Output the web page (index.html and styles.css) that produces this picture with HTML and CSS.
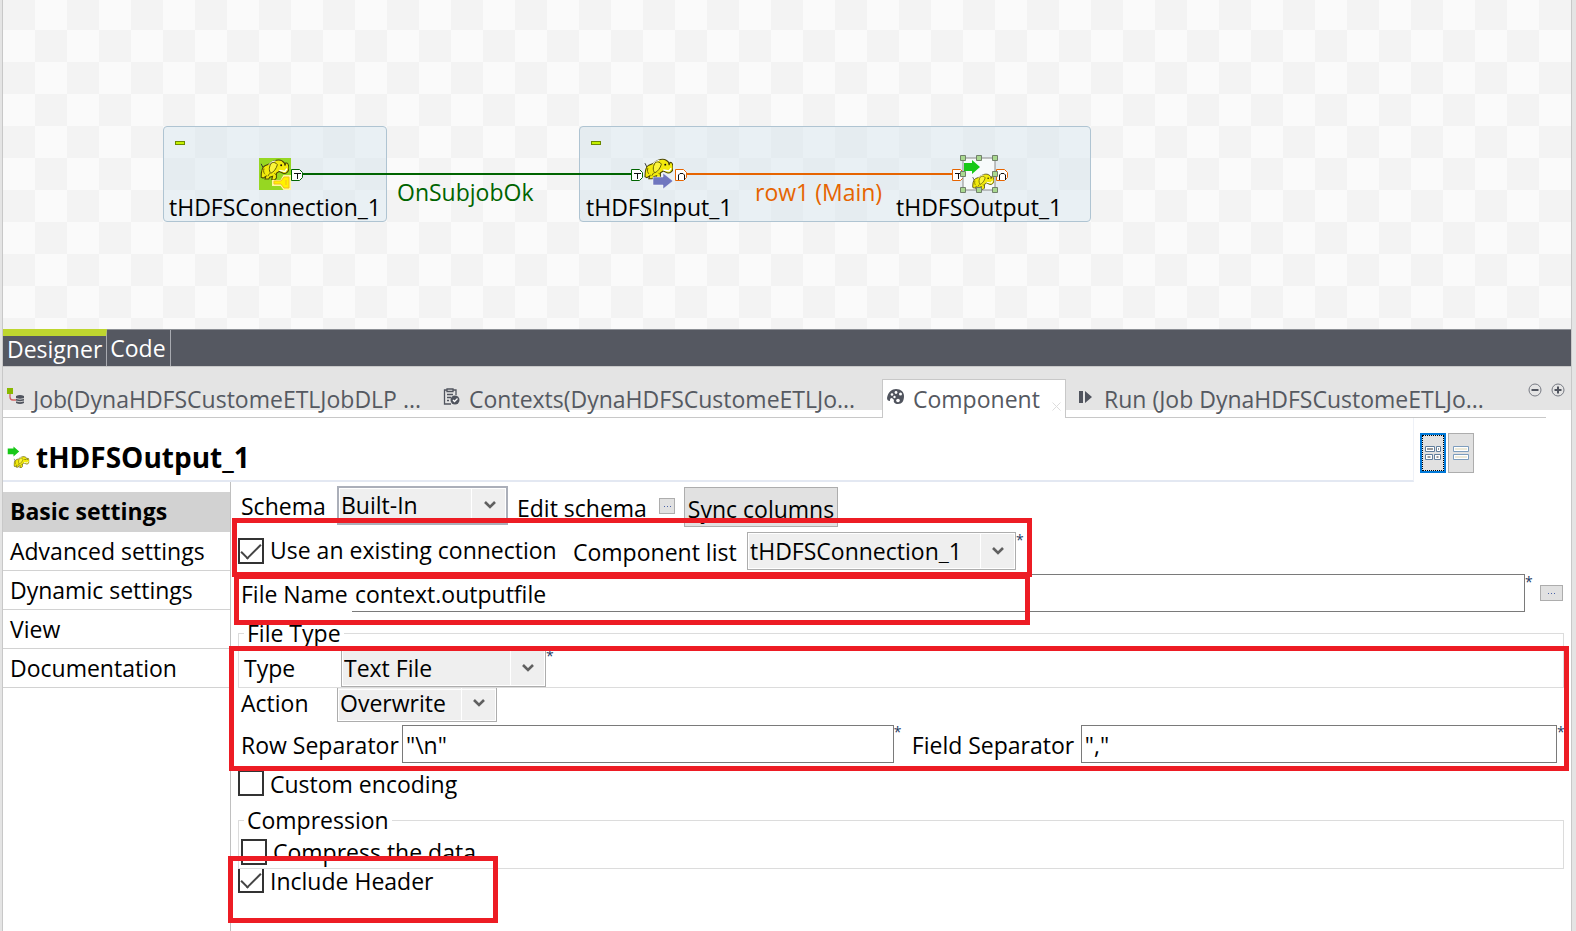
FILE: index.html
```html
<!DOCTYPE html>
<html lang="en">
<head>
<meta charset="utf-8">
<title>Job designer</title>
<link rel="stylesheet" href="styles.css">
</head>
<body>
<svg class="defs" aria-hidden="true">
  <symbol id="elephant" viewBox="0 0 30 22">
    <path d="M3 9 1 5" fill="none" stroke="#333" stroke-width="1"/>
    <path d="M10 5C14 1 20 0 23 2c2 1 3 3 3 5l1-3c2 0 3 3 3 6s-3 6-6 5l-4-2-3 2v5l-2 2h-3l1-4-3 1-1 2H5l1-3-3 2-2-1C1 15 1 9 5 7z" fill="#f2ea0c" stroke="#4a4604" stroke-width="1.1"/>
    <path d="M12 4c-3 4-3 8-1 11 3-1 6-5 7-9-1-2-4-3-6-2z" fill="#fbf53a" stroke="#5d5805"/>
    <path d="M4 10c-1 3 0 5 1 6M8 18l2-3M15 15l2 2" fill="none" stroke="#6b6506"/>
    <path d="m20 12 6 1 2-3" fill="none" stroke="#fff" stroke-width="1.4"/>
    <circle cx="22" cy="6.500" r="1" fill="#111"/>
    <path d="m9 6 3-3 4-1" fill="none" stroke="#fff"/>
  </symbol>
  <symbol id="chevron" viewBox="0 0 12 9">
    <path d="m1 1 5 5 5-5" fill="none" stroke="#606060" stroke-width="2.600"/>
  </symbol>
  <symbol id="output" viewBox="0 0 32 32">
    <path d="M1 5h8V2l8 7-8 7v-3H1z" fill="#17c817"/>
    <use href="#elephant" x="9" y="15" width="22" height="17"/>
  </symbol>
  <symbol id="port-t" viewBox="0 0 12 12">
    <path d="M.5.5h8l3 3v5l-3 3h-8z" fill="#fff" stroke="currentColor"/>
    <path d="M3 4.500h7M6.500 4.500V10" fill="none" stroke="#111"/>
  </symbol>
  <symbol id="port-n" viewBox="0 0 12 12">
    <path d="M.5.5h8l3 3v5l-3 3h-8z" fill="#fff" stroke="currentColor"/>
    <path d="M3.500 11V6l1.500-1.500h3L9.500 6v5" fill="none" stroke="#111"/>
  </symbol>
</svg>

<div class="window">
  <section class="canvas" aria-label="Designer canvas">
    <div class="subjob subjob-a"><i class="fold"></i></div>
    <div class="subjob subjob-b"><i class="fold"></i></div>

    <svg class="icon32 node-a" viewBox="0 0 32 32">
      <path d="M0 0h32v32H0z" fill="#96d722"/>
      <use href="#elephant" x="1" y="1" width="29" height="21"/>
      <path d="M14 23h8l3-5h6v13h-6l-3-4h-8z" fill="#fdf43a" stroke="#fff7a0" stroke-width="2"/>
      <path d="M15 23h7l3-4h5v11h-5l-3-4h-7zM27 22v5" fill="#fff200" stroke="#f5bd1c"/>
    </svg>
    <svg class="icon32 node-b" viewBox="0 0 32 32">
      <use href="#elephant" x="0" y="0" width="29" height="22"/>
      <path d="M9 19h10v-4l10 8-10 8v-4H9z" fill="#7077bf" stroke="#fff" stroke-width=".5"/>
    </svg>
    <svg class="port main port-4"><use href="#port-t"/></svg>
    <svg class="port main port-5"><use href="#port-n"/></svg>
    <div class="selection"></div>
    <svg class="icon32 node-c" viewBox="0 0 32 32"><use href="#output"/></svg>

    <i class="link link-ok"></i>
    <i class="link link-main"></i>
    <svg class="port ok port-1"><use href="#port-t"/></svg>
    <svg class="port ok port-2"><use href="#port-t"/></svg>
    <svg class="port main port-3"><use href="#port-n"/></svg>
    <svg class="handles" viewBox="0 0 38 38" fill="#a9d88f" stroke="#70806a">
      <path d="M3 3h32v32H3z" fill="none" stroke="#8a8a8a"/>
      <path d="M.5.5h5v5h-5zM16.500.5h5v5h-5zM32.500.5h5v5h-5zM.5 16.500h5v5h-5zM32.500 16.500h5v5h-5zM.5 32.500h5v5h-5zM16.500 32.500h5v5h-5zM32.500 32.500h5v5h-5z"/>
    </svg>

    <span class="name name-a">tHDFSConnection_1</span>
    <span class="name name-b">tHDFSInput_1</span>
    <span class="name name-c">tHDFSOutput_1</span>
    <span class="name name-ok">OnSubjobOk</span>
    <span class="name name-main">row1 (Main)</span>
  </section>

  <nav class="modes">
    <button class="mode active">Designer</button>
    <button class="mode">Code</button>
  </nav>

  <nav class="views">
    <button class="view view-job">
      <svg class="icon18" viewBox="0 0 18 18"><path d="M0 0h6v6H0z" fill="#8ab800"/><path d="M3 6v3q0 3 3 3h3" fill="none" stroke="#cf6060" stroke-width="1.300"/><path d="M9 8q4-2 8 0v7q-4 2-8 0z" fill="#50545e"/><path d="M9 10.500q4 1.500 8 0M9 13q4 1.500 8 0" fill="none" stroke="#ccc"/></svg>
      <span>Job(DynaHDFSCustomeETLJobDLP ...</span>
    </button>
    <button class="view view-contexts">
      <svg class="icon18" viewBox="0 0 18 18" fill="none" stroke="#50545e"><path d="M4 2H1.500v14H8M10 2h3v5M4 1h6v2.500H4zM4 6.500h6M4 9.500h4M4 12.500h2" stroke-width="1.300"/><circle cx="12" cy="12" r="4.500" fill="#50545e" stroke="none"/><path d="m10 12 1.500 1.500L14.500 10.500" stroke="#fff" stroke-width="1.300"/></svg>
      <span>Contexts(DynaHDFSCustomeETLJo...</span>
    </button>
    <button class="view current">
      <svg class="icon18" viewBox="0 0 18 18"><path d="M0 10C1 4 5 1 9 1c5 0 8 3 8 7 0 5-2 8-6 8-3 0-5-2-4-4l-2-2c-2 0-2 1-2 3-2 0-3-1-3-3z" fill="#50545e"/><g fill="#fff"><circle cx="5" cy="6.500" r="1.300"/><circle cx="9" cy="4.500" r="1.400"/><circle cx="13.500" cy="6" r="1.500"/><circle cx="7.500" cy="9" r="1.200"/><circle cx="11" cy="12.500" r="1.800"/></g></svg>
      <span>Component</span>
      <svg class="close" viewBox="0 0 9 9"><path d="m.5.5 8 8m0-8-8 8" stroke="#ddd"/></svg>
    </button>
    <button class="view view-run">
      <svg class="icon18" viewBox="0 0 18 18"><path d="M1 3h4v12H1zM7 3l7 6-7 6z" fill="#50545e"/></svg>
      <span>Run (Job DynaHDFSCustomeETLJo...</span>
    </button>
    <div class="tools">
      <button aria-label="Minimize"><svg viewBox="0 0 14 14" fill="none"><circle cx="7" cy="7" r="6" stroke="#777a83"/><path d="M3.500 7h7" stroke="#50545e" stroke-width="2"/></svg></button>
      <button aria-label="Maximize"><svg viewBox="0 0 14 14" fill="none"><circle cx="7" cy="7" r="6" stroke="#777a83"/><path d="M3.500 7h7M7 3.500v7" stroke="#50545e" stroke-width="2"/></svg></button>
    </div>
  </nav>

  <header class="heading">
    <h1><svg class="icon23"><use href="#output"/></svg>tHDFSOutput_1</h1>
    <div class="layouts">
      <button class="layout chosen" aria-label="Grid layout"><svg viewBox="0 0 18 16" fill="#fff" stroke="#5f7d9c"><path d="M1.500 1.500h9v5h-9zM12.500 1.500h4v5h-4zM1.500 9.500h7v5h-7zM10.500 9.500h6v5h-6z"/><path d="M3 4h6M14 4h1M3.500 12h3M12.500 12h2" stroke="#999" stroke-width="2"/></svg></button>
      <button class="layout" aria-label="List layout"><svg viewBox="0 0 18 16" fill="#fff" stroke="#7d9dbd"><path d="M1.500 1.500h15v5h-15zM1.500 9.500h15v5h-15z"/><path d="M3 4h12M3 12h12" stroke="#ece9d8" stroke-width="2"/></svg></button>
    </div>
  </header>

  <main class="body">
    <nav class="sections">
      <a class="section here" href="#basic">Basic settings</a>
      <a class="section" href="#advanced">Advanced settings</a>
      <a class="section" href="#dynamic">Dynamic settings</a>
      <a class="section" href="#view">View</a>
      <a class="section" href="#docs">Documentation</a>
    </nav>

    <form class="form" id="basic">
      <div class="row row-schema">
        <label class="caption" for="schema">Schema</label>
        <div class="pick pick-schema"><select id="schema"><option>Built-In</option></select><svg><use href="#chevron"/></svg></div>
        <span class="edit">Edit schema</span>
        <button type="button" class="dots" aria-label="Edit schema"><i></i></button>
        <button type="button" class="sync">Sync columns</button>
      </div>
      <div class="row row-connection">
        <input type="checkbox" id="existing" checked>
        <label class="check-label" for="existing">Use an existing connection</label>
        <label class="list-label" for="list">Component list</label>
        <div class="pick pick-list"><select id="list"><option>tHDFSConnection_1</option></select><svg><use href="#chevron"/></svg></div>
        <span class="star">*</span>
      </div>
      <div class="row row-file">
        <label class="caption" for="file">File Name</label>
        <input type="text" id="file" class="file" value="context.outputfile">
        <span class="star">*</span>
        <button type="button" class="dots wide" aria-label="Browse"><i></i></button>
      </div>
      <fieldset>
        <legend>File Type</legend>
        <div class="row row-type">
          <label class="caption" for="type">Type</label>
          <div class="pick pick-type"><select id="type"><option>Text File</option></select><svg><use href="#chevron"/></svg></div>
          <span class="star">*</span>
        </div>
      </fieldset>
      <div class="row row-action">
        <label class="caption" for="action">Action</label>
        <div class="pick pick-action"><select id="action"><option>Overwrite</option></select><svg><use href="#chevron"/></svg></div>
      </div>
      <div class="row row-separators">
        <label class="caption" for="rowsep">Row Separator</label>
        <input type="text" id="rowsep" class="rowsep" value='"\n"'>
        <span class="star">*</span>
        <label class="field-label" for="fieldsep">Field Separator</label>
        <input type="text" id="fieldsep" class="fieldsep" value='","'>
        <span class="star last">*</span>
      </div>
      <div class="row row-encoding">
        <input type="checkbox" id="encoding">
        <label class="check-label" for="encoding">Custom encoding</label>
      </div>
      <fieldset>
        <legend>Compression</legend>
        <div class="row row-compress">
          <input type="checkbox" id="compress">
          <label class="check-label" for="compress">Compress the data</label>
        </div>
      </fieldset>
      <div class="row row-header">
        <input type="checkbox" id="header" class="cut" checked>
        <label class="check-label" for="header">Include Header</label>
      </div>

      <i class="mark mark-connection"></i>
      <i class="mark mark-file"></i>
      <i class="mark mark-type"></i>
      <i class="mark mark-header"></i>
    </form>
  </main>
</div>
</body>
</html>
```

FILE: styles.css
```css
* { box-sizing: border-box; }
body {
  margin: 0;
  background: #e4e4e4;
  color: #000;
  font: 23px/24px "Open Sans", "Noto Sans", sans-serif;
}
button, input, select { font: inherit; color: inherit; border-radius: 0; }
button { padding: 0; border: 0; background: none; }
.defs { position: absolute; width: 0; height: 0; }
.window {
  display: flex;
  flex-direction: column;
  min-height: 100vh;
  margin: 0 4px 0 2px;
  border: solid #c8c8c8;
  border-width: 0 1px;
}

/* canvas */
.canvas {
  position: relative;
  height: 329px;
  overflow: hidden;
  background: conic-gradient(#fafafa 25%, #f3f3f3 0 50%, #fafafa 0 75%, #f3f3f3 0) 0 -2px / 64px 64px;
}
.subjob {
  position: absolute;
  top: 126px;
  height: 96px;
  border: 1px solid #afc4d2;
  border-radius: 4px;
  background: rgba(215, 230, 238, .5);
}
.subjob-a { left: 160px; width: 224px; }
.subjob-b { left: 576px; width: 512px; }
.fold {
  position: absolute;
  left: 11px;
  top: 14px;
  width: 10px;
  height: 4px;
  border: 1px solid #6d8a00;
  background: #c4f000;
}
.icon32 { position: absolute; top: 158px; width: 32px; height: 32px; }
.node-a { left: 256px; }
.node-b { left: 641px; }
.node-c { left: 960px; }
.selection { position: absolute; left: 960px; top: 158px; width: 32px; height: 32px; background: #f7fafb; }
.handles { position: absolute; left: 957px; top: 155px; width: 38px; height: 38px; }
.link { position: absolute; top: 173px; height: 2px; }
.link-ok { left: 299px; width: 330px; background: #006400; }
.link-main { left: 683px; width: 267px; background: #e66400; }
.port { position: absolute; top: 169px; width: 12px; height: 12px; }
.ok { color: #006400; }
.main { color: #e66400; }
.port-1 { left: 288px; }
.port-2 { left: 628px; }
.port-3 { left: 672px; }
.port-4 { left: 949px; }
.port-5 { left: 993px; }
.name { position: absolute; top: 195px; white-space: nowrap; }
.name-a { left: 166px; }
.name-b { left: 583px; }
.name-c { left: 893px; }
.name-ok { left: 394px; top: 180px; color: #006400; }
.name-main { left: 752px; top: 180px; color: #e66400; }

/* editor modes */
.modes { display: flex; height: 38px; background: #555861; border-top: 1px solid #8d9096; border-bottom: 1px solid #c8c8c8; }
.mode { padding: 0 4px 1px 3px; border-right: 1px solid #a8aab0; color: #fff; }
.mode.active { margin-top: -1px; padding: 0 4px 4px; border-top: 7px solid #bed62f; }

/* view tabs */
.views {
  display: flex;
  height: 51px;
  padding-top: 12px;
  background: linear-gradient(#e4e4e4 43px, #fff 0);
  color: #555961;
}
.view {
  display: flex;
  align-items: center;
  gap: 8px;
  padding: 0 0 0 4px;
  border-bottom: 1px solid #c8c8c8;
  text-align: left;
  white-space: nowrap;
}
.view span { padding-top: 2px; }
.view-job { width: 435px; }
.view-contexts { width: 444px; padding-left: 5px; }
.view.current { width: 184px; border: 1px solid #c8c8c8; border-bottom: 0; background: #fff; padding-bottom: 2px; }
.view-run { flex: 1; padding-left: 12px; }
.icon18 { flex: none; width: 18px; height: 18px; margin-bottom: 2px; }
.close { width: 9px; height: 9px; margin: 16px 0 0 4px; }
.tools { display: flex; align-items: flex-start; gap: 9px; margin: 4px 6px 0 -18px; }
.tools button, .tools svg { display: block; width: 14px; height: 14px; }

/* heading */
.heading { display: flex; height: 64px; padding-right: 97px; background: #fff; }
h1 {
  display: flex;
  flex: 1;
  align-items: center;
  gap: 6px;
  margin: 0;
  padding: 16px 0 0 4px;
  border-right: 1px solid #eef1f7;
  border-bottom: 2px solid #e3e8f2;
  font-size: 28px;
  line-height: 32px;
}
.icon23 { width: 23px; height: 23px; margin-bottom: 2px; }
.layouts { display: flex; gap: 2px; padding: 15px 0 0 6px; }
.layout { display: grid; place-items: center; width: 26px; height: 40px; border: 1px solid #adadad; background: #e1e1e1; }
.layout svg { width: 18px; height: 16px; }
.chosen { border: 2px solid #0078d7; outline: 1px dotted #000; outline-offset: -3px; }

/* body */
.body { display: flex; flex: 1; background: #fff; }
.sections { width: 228px; padding-top: 10px; border-right: 1px solid #c0c0c0; }
.section {
  display: block;
  padding: 7px 7px;
  border-bottom: 1px solid #d2d2d2;
  color: #000;
  text-decoration: none;
  white-space: nowrap;
}
.here { padding-bottom: 8px; background: #d2d2d2; font-weight: 700; }

.form { position: relative; flex: 1; min-width: 0; padding: 0 7px; }
.row { display: flex; align-items: center; white-space: nowrap; }
.caption { width: 99px; padding-left: 3px; }
.row-schema { height: 48px; }
.row-connection { height: 42px; }
.row-file { height: 42px; margin-bottom: 3px; }
.row-type { height: 38px; }
.row-action { height: 34px; }
.row-separators { height: 44px; margin-bottom: 2px; }
.row-encoding { height: 30px; margin-bottom: 6px; }
.row-compress { height: 32px; padding-left: 2px; }
.row-header { height: 24px; }
.row-file .caption { width: 114px; padding-top: 2px; }
.row-type .caption { width: 102px; padding-left: 5px; }
.row-separators .caption { width: 164px; padding-top: 2px; }
.row-action .caption { padding-bottom: 4px; }

.pick { display: grid; height: 38px; }
.pick select {
  grid-area: 1 / 1;
  appearance: none;
  min-width: 0;
  margin: 0;
  padding: 0 0 0 2px;
  border: 1px solid #adadad;
  outline: 1px solid #fff;
  outline-offset: -2px;
  background: linear-gradient(#fff, #fff) right 34px top / 1px 100% no-repeat #efefef;
}
.pick svg { grid-area: 1 / 1; place-self: center end; width: 12px; height: 9px; margin-right: 12px; pointer-events: none; }
.pick-schema { width: 171px; height: 39px; margin-bottom: 2px; }
.pick-schema select { border: 2px solid #abafb9; outline-offset: -3px; }
.pick-list { width: 269px; }
.pick-type { width: 205px; }
.pick-action { width: 160px; height: 34px; }
.pick-action select { border-top: 0; padding-bottom: 4px; }
.pick-action svg { margin-bottom: 4px; }

.edit { width: 151px; padding: 4px 0 0 9px; }
.dots { display: grid; place-items: center; width: 16px; height: 16px; border: 1px solid #adadad; background: #e1e1e1; }
.dots i { width: 7px; height: 1px; background: repeating-linear-gradient(90deg, #4a62a8 0 1px, #e1e1e1 1px 3px); }
.dots.wide { width: 23px; }
.sync { width: 154px; height: 40px; margin: 2px 0 0 9px; padding-top: 4px; border: 1px solid #adadad; background: #e1e1e1; }
.check-label { padding-left: 6px; }
.list-label { width: 174px; padding-top: 2px; }
.row-connection .check-label { width: 309px; padding-bottom: 2px; }
.row-connection input { margin-bottom: 6px; }
.star { align-self: flex-start; width: 15px; padding: 3px 0 0 0; color: #1d3a5f; font-size: 14px; line-height: 14px; }
.row-type .star { padding-top: 0; }
.row-separators .star { width: 18px; }
.row-separators .last { width: 7px; }

input[type="text"] { min-width: 0; height: 38px; padding: 1px 3px 0; border: 1px solid #7a7a7a; background: #fff; outline: 0; }
.file { flex: 1; }
.row-file .file { border-left: 0; }
.row-file .wide { margin-right: 1px; }
.rowsep { flex: 31; }
.fieldsep { flex: 30; }
.field-label { width: 169px; padding-top: 2px; }

input[type="checkbox"] {
  appearance: none;
  flex: none;
  width: 26px;
  height: 26px;
  margin: 0;
  border: 2px solid #333;
  background: #fff;
}
input[type="checkbox"]:checked {
  display: grid;
  place-items: center;
}
input[type="checkbox"]:checked::before {
  content: "";
  width: 18px;
  height: 8px;
  margin-top: -5px;
  border: solid #444;
  border-width: 0 0 2px 2px;
  rotate: -45deg;
}
input.cut { height: 24px; border-top: 0; }
.row-encoding .check-label { padding-top: 2px; }

fieldset { min-width: 0; margin: 0; padding: 0; border: 1px solid #dcdcdc; }
legend { margin-left: 5px; padding: 0 3px; line-height: 32px; }

/* red call-outs over the form */
.mark { position: absolute; border: 5px solid #ed1c24; pointer-events: none; }
.mark-connection { left: 1px; top: 36px; width: 800px; height: 59px; }
.mark-file { left: 3px; top: 92px; width: 796px; height: 51px; }
.mark-type { left: -2px; right: 2px; top: 164px; height: 125px; }
.mark-header { left: -3px; top: 374px; width: 270px; height: 67px; }
```
